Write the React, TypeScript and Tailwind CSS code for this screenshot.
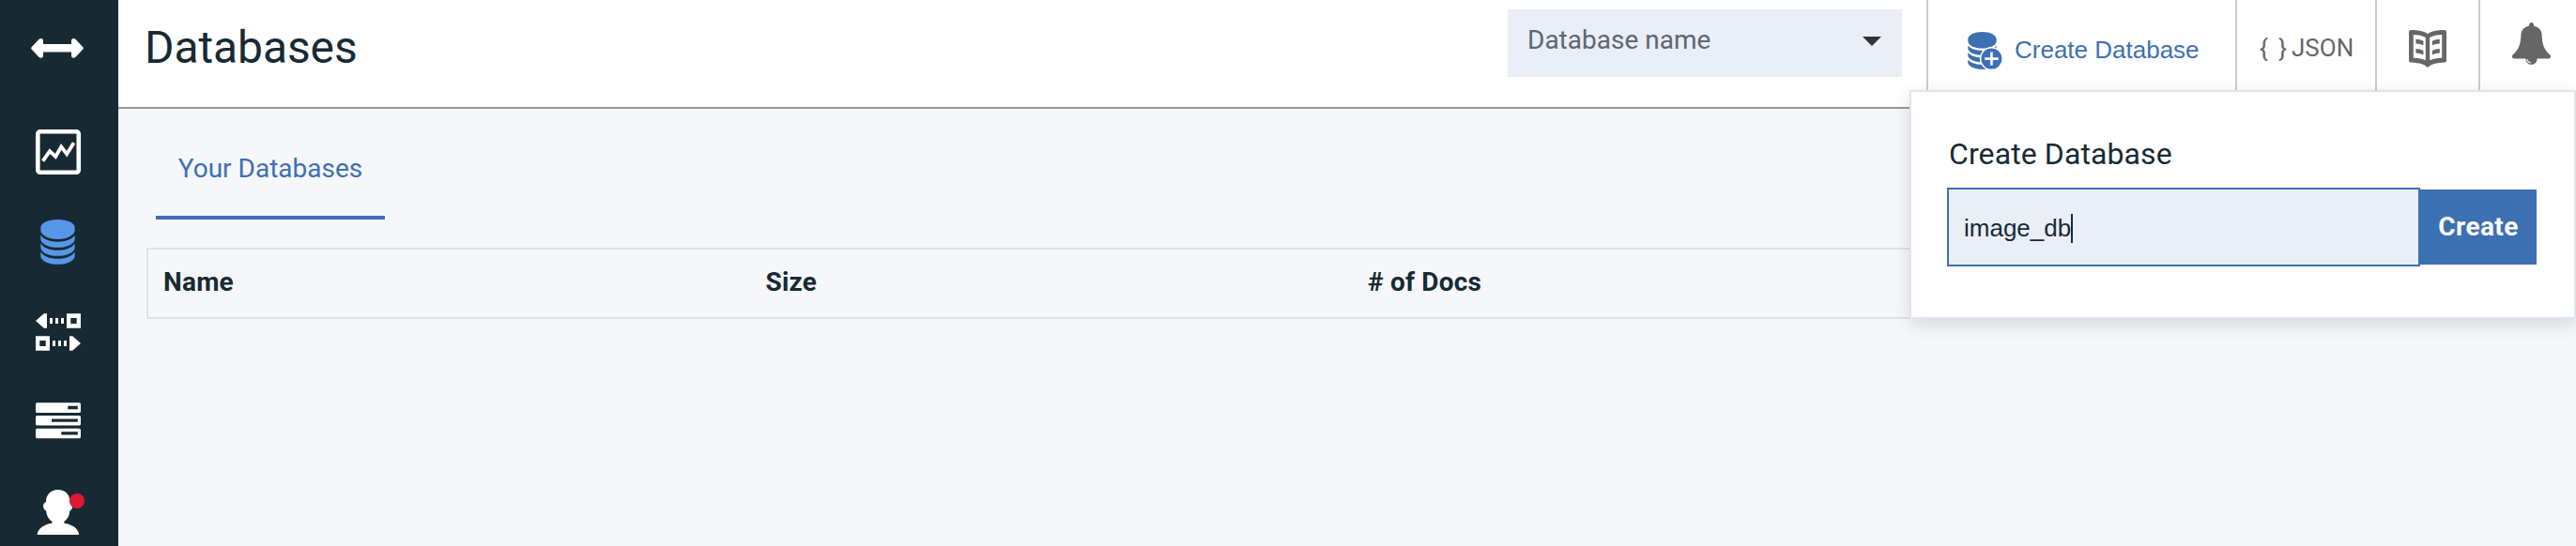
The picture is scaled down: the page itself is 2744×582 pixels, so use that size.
import type { ReactNode } from "react";

function Icon({ box, className, children }: { box: string; className: string; children: ReactNode }) {
  return (
    <svg viewBox={box} className={`block shrink-0 ${className}`} fill="currentColor" aria-hidden="true">
      {children}
    </svg>
  );
}

function Sidebar() {
  return (
    <nav className="flex h-full w-[126px] shrink-0 flex-col overflow-hidden bg-[#172a34] text-white">
      <Icon box="0 0 126 114" className="h-[114px] w-[126px]">
        <path d="M33.6 50.2 L41.6 41.8 Q43 40.6 44.8 41.2 Q46 41.8 46 43.4 V47 H76 V43.4 Q76 41.8 77.2 41.2 Q79 40.6 80.4 41.8 L88.4 50.2 Q89.4 51.4 88.4 52.6 L80.4 61 Q79 62.2 77.2 61.6 Q76 61 76 59.4 V55.6 H46 V59.4 Q46 61 44.8 61.6 Q43 62.2 41.6 61 L33.6 52.6 Q32.6 51.4 33.6 50.2 Z" />
      </Icon>
      <Icon box="0 114 126 96" className="h-24 w-[126px]">
        <rect x="40.3" y="140.3" width="43.5" height="43.5" rx="2.5" fill="none" stroke="currentColor" strokeWidth="4.6" />
        <path d="M45.6 171.6 L53 161.2 L59.2 167 L65.2 156.5 L71.2 164.2 L78.6 152.2" fill="none" stroke="currentColor" strokeWidth="3.8" />
      </Icon>
      <Icon box="0 210 126 96" className="h-24 w-[126px] text-[#5797e8]">
        <path d="M43.3 243 C43.3 237.6 51 234 61.5 234 C72 234 79.7 237.6 79.7 243 V245 C79.7 250.6 72 255 61.5 255 C51 255 43.3 250.6 43.3 245 Z" />
        <path id="disk" d="M43.3 250.4 C46 254.8 52.5 257.7 61.5 257.7 C70.5 257.7 77 254.8 79.7 250.4 V254.4 C79.7 259.6 72 263.8 61.5 263.8 C51 263.8 43.3 259.6 43.3 254.4 Z" />
        <use href="#disk" y="9" />
        <use href="#disk" y="18" />
      </Icon>
      <Icon box="0 306 126 96" className="h-24 w-[126px]">
        <path d="M38 342 L46.8 334.3 H50 V349.7 H46.8 Z M53 339 h3 v6 h-3 Z M59 339 h3 v6 h-3 Z M65 339 h3 v6 h-3 Z" />
        <path fillRule="evenodd" d="M71 334.3 H86 V349.7 H71 Z M75.3 339 V345 H81.7 V339 Z M38 358.3 H53 V373.7 H38 Z M42.3 363 V369 H48.7 V363 Z" />
        <path d="M86 366 L77.2 358.3 H74 V373.7 H77.2 Z M56 363 h3 v6 h-3 Z M62 363 h3 v6 h-3 Z M68 363 h3 v6 h-3 Z" />
      </Icon>
      <Icon box="0 402 126 96" className="h-24 w-[126px]">
        <rect x="38" y="429.3" width="48" height="10.7" rx="1.6" />
        <rect x="38" y="443" width="48" height="10.6" rx="1.6" />
        <rect x="38" y="456.8" width="48" height="10.4" rx="1.6" />
        <path className="text-[#172a34]" fill="#172a34" d="M72.3 432.8 H82.8 V436.2 H72.3 Z M55 446.4 H82.8 V449.8 H55 Z M65.3 460.2 H82.8 V463.6 H65.3 Z" />
      </Icon>
      <Icon box="0 498 126 96" className="h-24 w-[126px]">
        <path d="M61.8 522 C69.4 522 74.6 527.2 74.6 535 Q77.6 536 77.4 539.5 Q77 543.5 74.4 544.4 C74 550 71.4 553.6 68.4 555.8 V557.8 C77 559 83.4 563.4 84.2 570 H39.6 C40.4 563.4 46.8 559 55.4 557.8 V555.8 C52.2 553.6 49.6 550 49.2 544.4 Q46.4 543.5 46 539.5 Q46 536 49 535 C49 527.2 54.2 522 61.8 522 Z" />
        <circle fill="#e0182d" cx="82" cy="534" r="8" />
      </Icon>
    </nav>
  );
}

function Header() {
  return (
    <header className="flex h-[116px] shrink-0 border-b-2 border-[#97989c] bg-white text-[#666666]">
      <h1 className="flex-1 pt-[17px] pl-7 text-[48px] leading-[68px] tracking-[-0.1px] text-[#172a34]">Databases</h1>
      <div className="mt-2.5 mr-[26px] flex h-[72px] w-[420px] items-center justify-between bg-[#eaeef6] pr-[22px] pl-[21px] text-[#5a6872]">
        <span className="-mt-1.5 text-[28px] leading-9">Database name</span>
        <Icon box="0 0 20 10" className="-mt-1 h-2.5 w-5 text-[#333333]">
          <path d="M0 0 H20 L10 10 Z" />
        </Icon>
      </div>
      <div className="flex w-[329px] border-l-2 border-[#cccccc] text-[#3d70b2]">
        <Icon box="2054 0 80 114" className="h-[114px] w-20">
          <path d="M2096.3 42 C2096.3 37.4 2103 34 2111.5 34 C2120 34 2126.7 37.4 2126.7 42 V43.5 C2126.7 48.4 2120 51.6 2111.5 51.6 C2103 51.6 2096.3 48.4 2096.3 43.5 Z" />
          <path id="band" d="M2096.3 48.6 C2099 52 2104.5 53.9 2111.5 53.9 C2118.5 53.9 2124 52 2126.7 48.6 V51.6 C2126.7 55.6 2120 58.9 2111.5 58.9 C2103 58.9 2096.3 55.6 2096.3 51.6 Z" />
          <use href="#band" y="7.5" />
          <use href="#band" y="15" />
          <circle cx="2121.4" cy="62.6" r="11.8" stroke="#ffffff" strokeWidth="1.6" />
          <path d="M2121.4 55.4 V69.8 M2114.2 62.6 H2128.6" stroke="#ffffff" strokeWidth="2.6" />
        </Icon>
        <span className="mt-[35px] pl-3 font-['Liberation_Sans',sans-serif] text-[26px] leading-9 whitespace-nowrap">Create Database</span>
      </div>
      <div className="flex w-[149px] border-l-2 border-[#cccccc] pt-[33px] pl-6 text-[26px] leading-9 whitespace-nowrap">
        <span className="w-[34px] tracking-[2.5px]">{"{ }"}</span>
        <span>JSON</span>
      </div>
      <div className="w-[110px] border-l-2 border-[#cccccc]">
        <Icon box="2532 0 108 114" className="h-[114px] w-[108px]">
          <path fillRule="evenodd" d="M2566 34 Q2566 32 2568 32 C2576 32 2582 33 2586 36.2 C2590 33 2596 32 2604 32 Q2606 32 2606 34 V64.4 Q2606 66.2 2604 66.4 C2597 66.8 2592 67.6 2589 69.6 Q2588 71.6 2586 71.6 Q2584 71.6 2583 69.6 C2580 67.6 2575 66.8 2568 66.4 Q2566 66.2 2566 64.4 Z M2570.8 37 V61.8 C2576 62 2580.4 62.6 2583.8 64.2 V40 C2580.4 37.8 2576 37.2 2570.8 37 Z M2601.2 37 C2596 37.2 2591.6 37.8 2588.2 40 V64.2 C2591.6 62.6 2596 62 2601.2 61.8 Z" />
          <path d="M2573.4 41.8 Q2578 41.8 2581.4 43.8 V48.2 Q2578 46.4 2573.4 46.4 Z M2573.4 52 Q2578 52 2581.4 54 V58.4 Q2578 56.6 2573.4 56.6 Z M2598.8 41.8 Q2594.2 41.8 2590.8 43.8 V48.2 Q2594.2 46.4 2598.8 46.4 Z M2598.8 52 Q2594.2 52 2590.8 54 V58.4 Q2594.2 56.6 2598.8 56.6 Z" />
        </Icon>
      </div>
      <div className="w-[104px] border-l-2 border-[#cccccc]">
        <Icon box="2642 0 102 114" className="h-[114px] w-[102px]">
          <path d="M2696.5 24 Q2699 24 2699.2 27.8 C2704.5 29 2707.4 32.4 2707.6 37 C2708 48 2710 52.6 2716.4 58.6 Q2717.6 60.2 2716.6 61.4 Q2716 62.4 2714.4 62.4 H2702.6 C2702.6 66 2700 68.8 2696.5 68.8 C2693 68.8 2690.4 66 2690.4 62.4 H2678.6 Q2677 62.4 2676.2 61.4 Q2675.4 60.2 2676.6 58.6 C2683 52.6 2685 48 2685.4 37 C2685.6 32.4 2688.5 29 2693.8 27.8 Q2694 24 2696.5 24 Z" />
          <path d="M2691.8 63.2 Q2692.4 66.6 2696 67" fill="none" stroke="#ffffff" strokeWidth="1.1" />
        </Icon>
      </div>
    </header>
  );
}

function CreatePanel() {
  return (
    <section className="absolute top-24 right-0 h-[244px] w-[710px] border-2 border-[#dfe5eb] bg-white pt-[44px] pl-[38px] text-[#172a34] shadow-[0_6px_18px_0_rgba(0,0,0,0.13)]">
      <h2 className="pl-0.5 text-[32px] leading-[44px] tracking-[0.1px]">Create Database</h2>
      <div className="mt-[14px] flex items-center">
        <div className="flex h-[84px] w-[504px] items-center border-2 border-[#3d70b2] bg-[#eaeef6] pt-0.5 pl-4 font-['Liberation_Sans',sans-serif] text-[26px]">
          <span>image_db</span>
          <span className="h-[31px] w-0.5 bg-[#172a34]" />
        </div>
        <button className="h-20 w-[124px] bg-[#3d70b2] text-[28px] font-bold tracking-[0.4px] text-white">Create</button>
      </div>
    </section>
  );
}

export default function App() {
  return (
    <div className="relative flex h-[582px] w-[2744px] overflow-hidden bg-[#f5f7fb] font-[Roboto,sans-serif]">
      <Sidebar />
      <div className="flex flex-1 flex-col">
        <Header />
        <main className="pr-[18px] pl-[30px]">
          <div className="ml-2.5 flex h-[118px] w-[244px] justify-center border-b-4 border-[#3d70b2] pt-[46px] text-[28px] leading-9 whitespace-nowrap text-[#3d70b2]">
            Your Databases
          </div>
          <div className="mt-[30px] grid h-[76px] grid-cols-4 items-center border-2 border-[#e0e2e6] pb-0.5 text-[28px] leading-9 font-bold tracking-[0.2px] text-[#172a34]">
            <span className="pl-4">Name</span>
            <span className="pl-4">Size</span>
            <span className="pl-4"># of Docs</span>
          </div>
        </main>
      </div>
      <CreatePanel />
    </div>
  );
}
